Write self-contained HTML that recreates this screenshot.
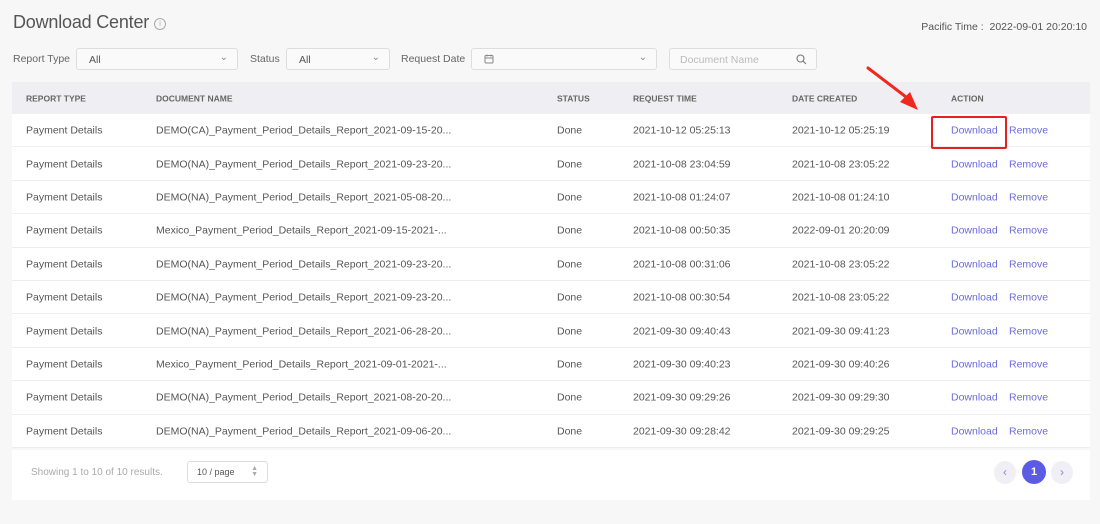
<!DOCTYPE html>
<html><head><style>
*{box-sizing:border-box;margin:0;padding:0}
body{width:1100px;height:524px;background:#f7f7f7;font-family:"Liberation Sans",sans-serif;position:relative;overflow:hidden;color:#555}
.a{position:absolute;white-space:nowrap}
.title{left:13px;top:12px;font-size:18px;color:#555;letter-spacing:-0.2px}
.sel{position:absolute;top:48px;height:22px;border:1px solid #ddd;border-radius:3px;background:#fafafa;font-size:10.5px;color:#555;padding:5px 12px}
.lbl{position:absolute;top:53px;font-size:10.5px;color:#666}
.chev{position:absolute;right:9px;top:3px;font-size:10px;color:#888}
.table{position:absolute;left:12px;top:82px;width:1078px;background:#fff}
.hd{height:32px;background:#efeff3;position:relative;font-size:8.5px;font-weight:bold;color:#666}
.row{height:33.4px;border-bottom:1px solid #eee;position:relative;font-size:10.5px;color:#555}
.c{position:absolute;top:50%;transform:translateY(-45%);white-space:nowrap}
.lk{color:#6b6bdc}
</style></head><body>
<div class="a title">Download Center <span style="display:inline-block;width:12px;height:12px;border:1px solid #aaa;border-radius:50%;font-size:8px;text-align:center;line-height:10px;color:#aaa;vertical-align:2px">i</span></div>
<div class="a" style="right:13px;top:21px;font-size:10.5px;color:#555">Pacific Time :&nbsp; 2022-09-01 20:20:10</div>
<div class="lbl" style="left:13px">Report Type</div>
<div class="sel" style="left:76px;width:162px">All<span class="chev">&#8964;</span></div>
<div class="lbl" style="left:250px">Status</div>
<div class="sel" style="left:286px;width:104px">All<span class="chev">&#8964;</span></div>
<div class="lbl" style="left:401px">Request Date</div>
<div class="sel" style="left:471px;width:186px"><svg style="position:absolute;left:12px;top:5px" width="10" height="10" viewBox="0 0 10 10"><rect x="1" y="1.5" width="8" height="7.5" rx="1" fill="none" stroke="#888"/><path d="M1 4h8M3 0.5v2M7 0.5v2" stroke="#888"/></svg><span class="chev">&#8964;</span></div>
<div class="sel" style="left:669px;width:148px;color:#bbb;padding-left:10px">Document Name<svg style="position:absolute;right:9px;top:5px" width="11" height="11" viewBox="0 0 11 11"><circle cx="4.5" cy="4.5" r="3.5" fill="none" stroke="#777" stroke-width="1.1"/><path d="M7 7l3 3" stroke="#777" stroke-width="1.1"/></svg></div>
<div class="table">
<div class="hd"><span class="c" style="left:14px">REPORT TYPE</span><span class="c" style="left:144px">DOCUMENT NAME</span><span class="c" style="left:545px">STATUS</span><span class="c" style="left:621px">REQUEST TIME</span><span class="c" style="left:780px">DATE CREATED</span><span class="c" style="left:939px">ACTION</span></div>
<div id="rows"></div>
</div>
<div class="a" style="left:12px;top:450px;width:1078px;height:50px;background:#fff"></div>
<div class="a" style="left:31px;top:467px;font-size:10px;color:#aaa">Showing 1 to 10 of 10 results.</div>
<div class="a" style="left:187px;top:461px;width:81px;height:22px;border:1px solid #ddd;border-radius:3px;font-size:9px;color:#555;padding:5px 9px;background:#fff">10 / page<span style="position:absolute;right:9px;top:4px;font-size:7px;color:#aaa;line-height:6px">&#9650;<br>&#9660;</span></div>
<div class="a" style="left:994px;top:461px;width:22px;height:23px;border-radius:50%;background:#efeff5;color:#88c;text-align:center;font-size:12px;line-height:22px">&#8249;</div>
<div class="a" style="left:1022px;top:460px;width:24px;height:24px;border-radius:50%;background:#5b5be6;color:#fff;text-align:center;font-size:11px;font-weight:bold;line-height:24px">1</div>
<div class="a" style="left:1051px;top:461px;width:22px;height:23px;border-radius:50%;background:#efeff5;color:#88c;text-align:center;font-size:12px;line-height:22px">&#8250;</div>
<div class="a" style="left:931px;top:116px;width:76px;height:33px;border:2px solid #e5201d;border-radius:2px"></div>
<svg class="a" style="left:860px;top:62px" width="70" height="55"><path d="M8 6 L50 38" stroke="#f0281e" stroke-width="3" stroke-linecap="round"/><path d="M58 48 L40 40 L50 30 Z" fill="#f0281e"/></svg>
<script>
var d=[["DEMO(CA)_Payment_Period_Details_Report_2021-09-15-20...","2021-10-12 05:25:13","2021-10-12 05:25:19"],
["DEMO(NA)_Payment_Period_Details_Report_2021-09-23-20...","2021-10-08 23:04:59","2021-10-08 23:05:22"],
["DEMO(NA)_Payment_Period_Details_Report_2021-05-08-20...","2021-10-08 01:24:07","2021-10-08 01:24:10"],
["Mexico_Payment_Period_Details_Report_2021-09-15-2021-...","2021-10-08 00:50:35","2022-09-01 20:20:09"],
["DEMO(NA)_Payment_Period_Details_Report_2021-09-23-20...","2021-10-08 00:31:06","2021-10-08 23:05:22"],
["DEMO(NA)_Payment_Period_Details_Report_2021-09-23-20...","2021-10-08 00:30:54","2021-10-08 23:05:22"],
["DEMO(NA)_Payment_Period_Details_Report_2021-06-28-20...","2021-09-30 09:40:43","2021-09-30 09:41:23"],
["Mexico_Payment_Period_Details_Report_2021-09-01-2021-...","2021-09-30 09:40:23","2021-09-30 09:40:26"],
["DEMO(NA)_Payment_Period_Details_Report_2021-08-20-20...","2021-09-30 09:29:26","2021-09-30 09:29:30"],
["DEMO(NA)_Payment_Period_Details_Report_2021-09-06-20...","2021-09-30 09:28:42","2021-09-30 09:29:25"]];
var h="";d.forEach(function(r){h+='<div class="row"><span class="c" style="left:14px">Payment Details</span><span class="c" style="left:144px">'+r[0]+'</span><span class="c" style="left:545px">Done</span><span class="c" style="left:621px">'+r[1]+'</span><span class="c" style="left:780px">'+r[2]+'</span><span class="c lk" style="left:939px">Download</span><span class="c lk" style="left:997px">Remove</span></div>'});
document.getElementById("rows").innerHTML=h;
</script>
</body></html>
